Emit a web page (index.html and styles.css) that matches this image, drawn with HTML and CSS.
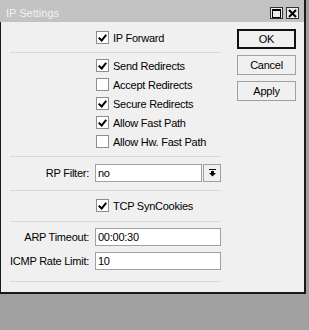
FILE: index.html
```html
<!DOCTYPE html>
<html lang="en">
<head>
  <meta charset="UTF-8">
  <title>IP Settings</title>
  <link rel="stylesheet" href="styles.css">
</head>
<body>

<div class="window">
  <div class="titlebar">
    <span class="title">IP Settings</span>
    <div class="tb-btns">
      <span class="tb-btn">
        <svg width="9" height="9" viewBox="0 0 9 9"><rect x="0.5" y="0.5" width="8" height="8" fill="none" stroke="#000"/><rect x="0" y="0" width="9" height="2" fill="#000"/></svg>
      </span>
      <span class="tb-btn">
        <svg width="9" height="9" viewBox="0 0 9 9"><path d="M1 1 L8 8 M8 1 L1 8" stroke="#000" stroke-width="2"/></svg>
      </span>
    </div>
  </div>

  <div class="content">
    <div class="form">
      <div class="sec sec-1">
        <label class="check"><span class="box on"></span>IP Forward</label>
      </div>

      <div class="sec sec-2">
        <label class="check"><span class="box on"></span>Send Redirects</label>
        <label class="check"><span class="box"></span>Accept Redirects</label>
        <label class="check"><span class="box on"></span>Secure Redirects</label>
        <label class="check"><span class="box on"></span>Allow Fast Path</label>
        <label class="check"><span class="box"></span>Allow Hw. Fast Path</label>
      </div>

      <div class="sec sec-3">
        <div class="field">
          <label>RP Filter:</label>
          <div class="select">
            <div class="input">no</div>
            <span class="drop">
              <svg width="7" height="8" viewBox="0 0 7 8"><rect x="0" y="0" width="7" height="1" fill="#000"/><rect x="2" y="2" width="3" height="2" fill="#000"/><path d="M0 4 L7 4 L3.5 7.5 Z" fill="#000"/></svg>
            </span>
          </div>
        </div>
      </div>

      <div class="sec sec-4">
        <label class="check"><span class="box on"></span>TCP SynCookies</label>
      </div>

      <div class="sec sec-5">
        <div class="field">
          <label>ARP Timeout:</label>
          <div class="input">00:00:30</div>
        </div>
        <div class="field">
          <label>ICMP Rate Limit:</label>
          <div class="input">10</div>
        </div>
      </div>
    </div>

    <div class="actions">
      <button class="btn btn-default">OK</button>
      <button class="btn">Cancel</button>
      <button class="btn">Apply</button>
    </div>
  </div>
</div>

</body>
</html>
```

FILE: styles.css
```css
body {
    margin: 0;
    background: #a0a0a0;
    font-family: "Liberation Sans", Arial, sans-serif;
    font-size: 11px;
    letter-spacing: -0.25px;
    color: #000;
}

.window {
    width: 306px;
    box-sizing: border-box;
    border-right: 2px solid #1a1a1a;
    border-bottom: 2px solid #1a1a1a;
    background: #f0f0f0;
}

.titlebar {
    height: 22px;
    box-sizing: border-box;
    padding: 4px 5px 0 6px;
    background: #c3c3c3;
    display: flex;
    align-items: center;
    justify-content: space-between;
}

.title {
    color: #f2f2f2;
    letter-spacing: 0;
}

.tb-btns {
    display: flex;
    gap: 3px;
}

.tb-btn {
    width: 13px;
    height: 12px;
    box-sizing: border-box;
    border: 1px solid #333;
    background: #ececec;
    display: flex;
    align-items: center;
    justify-content: center;
}

.content {
    display: flex;
    border-left: 1px solid #1a1a1a;
    padding: 0 8px 10px 9px;
}

.form {
    width: 211px;
}

.sec {
    border-bottom: 1px solid #d8d8d8;
}

.sec-1 { padding: 6px 0 5px; }
.sec-2 { padding: 3px 0 5px; }
.sec-3 { padding: 6px 0 7px; }
.sec-4 { padding: 5px 0 6px; }
.sec-5 {
    padding: 5px 0 10px;
    display: flex;
    flex-direction: column;
    gap: 4px;
}

.check {
    display: flex;
    align-items: center;
    gap: 4px;
    height: 19px;
    padding-left: 86px;
    white-space: nowrap;
}

.box {
    width: 13px;
    height: 13px;
    box-sizing: border-box;
    border: 1px solid #8e8e8e;
    background: #fff;
    position: relative;
}

.box.on::after {
    content: "";
    position: absolute;
    left: 3px;
    top: 1px;
    width: 3px;
    height: 6px;
    border: solid #000;
    border-width: 0 2px 2px 0;
    transform: rotate(40deg);
}

.field {
    display: grid;
    grid-template-columns: 79px 1fr;
    column-gap: 6px;
    align-items: center;
    height: 20px;
}

.field label {
    display: flex;
    justify-content: flex-end;
    white-space: nowrap;
}

.input {
    height: 18px;
    box-sizing: border-box;
    border: 1px solid #a0a0a0;
    background: #fff;
    padding: 0 2px;
    line-height: 16px;
}

.select {
    display: flex;
    gap: 1px;
}

.select .input {
    flex: 1;
}

.drop {
    width: 18px;
    height: 18px;
    box-sizing: border-box;
    border: 1px solid #a0a0a0;
    background: #f0f0f0;
    display: flex;
    align-items: center;
    justify-content: center;
}

.actions {
    margin-left: 16px;
    width: 59px;
    padding-top: 7px;
    display: flex;
    flex-direction: column;
    gap: 6px;
}

.btn {
    height: 20px;
    box-sizing: border-box;
    padding: 0;
    border: 1px solid #a0a0a0;
    background: #f0f0f0;
    font: inherit;
    letter-spacing: inherit;
    color: #000;
}

.btn-default {
    border: 2px solid #111;
}
```
